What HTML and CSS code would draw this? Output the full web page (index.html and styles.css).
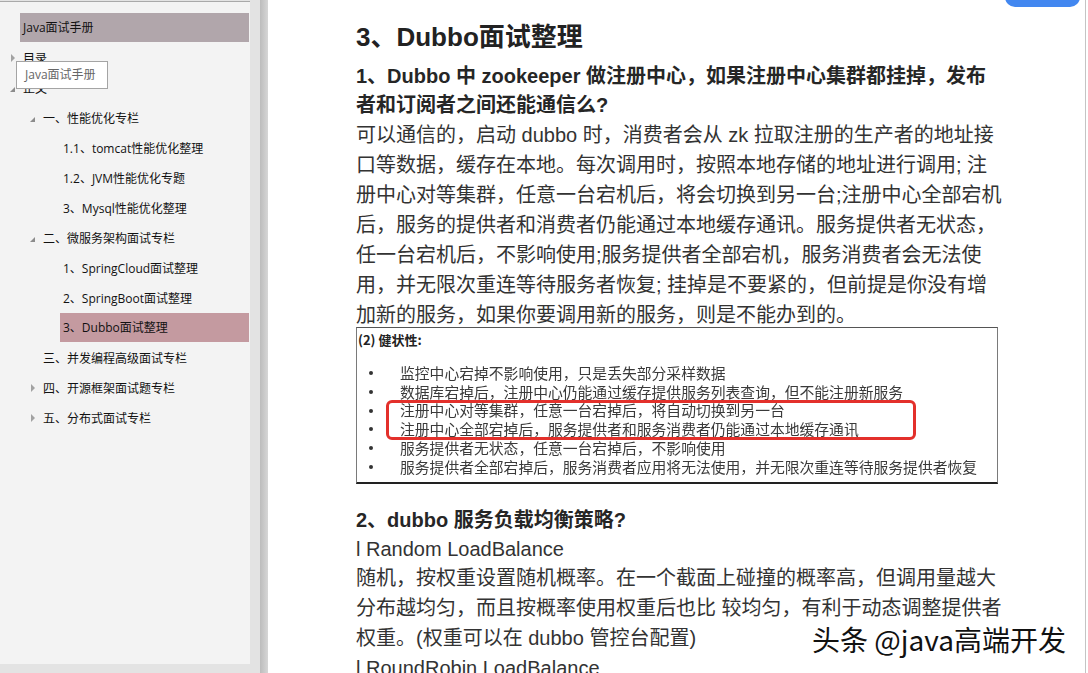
FILE: index.html
```html
<!DOCTYPE html>
<html lang="zh-CN">
<head>
<meta charset="UTF-8">
<title>Java面试手册</title>
<link rel="stylesheet" href="styles.css">
</head>
<body>
<div class="app">
    <div class="nav-pane">
        <aside class="sidebar">
            <div class="doc-title">Java面试手册</div>
            <ul class="tree">
                <li class="row lv0"><span class="tw closed"></span><span class="label">目录</span></li>
                <li class="row lv0"><span class="tw open"></span><span class="label">正文</span></li>
                <li class="row lv1"><span class="tw open"></span><span class="label">一、性能优化专栏</span></li>
                <li class="row lv2"><span class="tw"></span><span class="label">1.1、tomcat性能优化整理</span></li>
                <li class="row lv2"><span class="tw"></span><span class="label">1.2、JVM性能优化专题</span></li>
                <li class="row lv2"><span class="tw"></span><span class="label">3、Mysql性能优化整理</span></li>
                <li class="row lv1"><span class="tw open"></span><span class="label">二、微服务架构面试专栏</span></li>
                <li class="row lv2"><span class="tw"></span><span class="label">1、SpringCloud面试整理</span></li>
                <li class="row lv2"><span class="tw"></span><span class="label">2、SpringBoot面试整理</span></li>
                <li class="row lv2 selected"><span class="tw"></span><span class="label">3、Dubbo面试整理</span></li>
                <li class="row lv1"><span class="tw"></span><span class="label">三、并发编程高级面试专栏</span></li>
                <li class="row lv1"><span class="tw closed"></span><span class="label">四、开源框架面试题专栏</span></li>
                <li class="row lv1"><span class="tw closed"></span><span class="label">五、分布式面试专栏</span></li>
            </ul>
            <div class="tooltip">Java面试手册</div>
        </aside>
    </div>
    <div class="splitter"></div>
    <main class="page">
        <div class="badge"></div>
        <h1 class="title">3、Dubbo面试整理</h1>
        <h2 class="q">1、Dubbo 中 zookeeper 做注册中心，如果注册中心集群都挂掉，发布<br>者和订阅者之间还能通信么?</h2>
        <p class="para">可以通信的，启动 dubbo 时，消费者会从 zk 拉取注册的生产者的地址接<br>口等数据，缓存在本地。每次调用时，按照本地存储的地址进行调用; 注<br>册中心对等集群，任意一台宕机后，将会切换到另一台;注册中心全部宕机<br>后，服务的提供者和消费者仍能通过本地缓存通讯。服务提供者无状态，<br>任一台宕机后，不影响使用;服务提供者全部宕机，服务消费者会无法使<br>用，并无限次重连等待服务者恢复; 挂掉是不要紧的，但前提是你没有增<br>加新的服务，如果你要调用新的服务，则是不能办到的。</p>

        <div class="shot">
            <div class="shot-head">(2) 健状性:</div>
            <ul class="shot-list">
                <li>监控中心宕掉不影响使用，只是丢失部分采样数据</li>
                <li>数据库宕掉后，注册中心仍能通过缓存提供服务列表查询，但不能注册新服务</li>
                <li>注册中心对等集群，任意一台宕掉后，将自动切换到另一台</li>
                <li>注册中心全部宕掉后，服务提供者和服务消费者仍能通过本地缓存通讯</li>
                <li>服务提供者无状态，任意一台宕掉后，不影响使用</li>
                <li>服务提供者全部宕掉后，服务消费者应用将无法使用，并无限次重连等待服务提供者恢复</li>
            </ul>
            <div class="mark"></div>
        </div>

        <h2 class="q q2">2、dubbo 服务负载均衡策略?</h2>
        <p class="para">
            <span class="item">l Random LoadBalance</span>
            随机，按权重设置随机概率。在一个截面上碰撞的概率高，但调用量越大<br>分布越均匀，而且按概率使用权重后也比 较均匀，有利于动态调整提供者<br>权重。(权重可以在 dubbo 管控台配置)<br>l RoundRobin LoadBalance
        </p>
        <div class="watermark">头条 @java高端开发</div>
    </main>
</div>
</body>
</html>
```

FILE: styles.css
```css
html, body {
  margin: 0;
  height: 100%;
  overflow: hidden;
  background-color: #fff;
}

.app {
  display: flex;
  height: 100vh;
}

/* left outline pane */
.nav-pane {
  width: 260px;
  flex: none;
  background-color: #e3e3e3;
}

.sidebar {
  position: relative;
  width: 250px;
  height: 662px;
  margin-top: 1px;
  border-top: 1px solid #a9a9a9;
  background-color: #f3f3f3;
  font-family: 'Open Sans', 'Noto Sans CJK SC', sans-serif;
  font-size: 12px;
  color: #111;
}

.doc-title {
  margin: 11px 1px 1px 20px;
  height: 29px;
  line-height: 29px;
  padding-left: 3px;
  background-color: #b1a6ab;
}

.tree {
  list-style: none;
  margin: 0;
  padding: 0;
}

.row {
  display: flex;
  height: 30px;
  align-items: center;
}

.row.lv0 { padding-left: 10px; }
.row.lv1 { padding-left: 30px; }
.row.lv2 { padding-left: 50px; }

.tw {
  width: 13px;
  flex: none;
  display: flex;
  align-items: center;
}

.tw.closed::before {
  content: "";
  margin-left: 1px;
  border-left: 4px solid #a2a2a2;
  border-top: 4px solid transparent;
  border-bottom: 4px solid transparent;
}

.tw.open::before {
  content: "";
  margin-top: 2px;
  border-right: 5px solid #8c8c8c;
  border-top: 5px solid transparent;
}

.label {
  flex: 1;
  white-space: nowrap;
}

.row.selected .label {
  align-self: flex-start;
  height: 29px;
  line-height: 29px;
  margin-left: -3px;
  margin-right: 1px;
  padding-left: 3px;
  background-color: #c49aa0;
}

.tooltip {
  position: absolute;
  left: 16px;
  top: 59px;
  width: 92px;
  height: 28px;
  line-height: 26px;
  padding-left: 8px;
  box-sizing: border-box;
  border: 1px solid #a4a4a4;
  background-color: #fff;
  color: #666;
}

.splitter {
  width: 8px;
  flex: none;
  background: linear-gradient(to right, #bcbcbc, #d6d6d6);
}

/* document page */
.page {
  position: relative;
  flex: 1;
  margin-right: 2px;
  border-right: 1px solid #c4c4c4;
  padding: 17px 0 0 88px;
  font-family: 'Liberation Sans', 'Noto Sans CJK SC', sans-serif;
  color: #333;
  overflow: hidden;
}

.badge {
  position: absolute;
  right: 5px;
  top: -20px;
  width: 75px;
  height: 27px;
  border-radius: 10px;
  background-color: #4287f0;
}

.title {
  margin: 0 0 5px;
  font-size: 26px;
  line-height: 40px;
  color: #222;
}

.q {
  margin: 0;
  font-size: 20px;
  line-height: 29px;
  color: #262626;
}

.q2 {
  margin-top: 21px;
  line-height: 30px;
}

.para {
  margin: 0;
  font-size: 20px;
  line-height: 30px;
  white-space: nowrap;
}

.item {
  display: block;
  line-height: 28px;
}

/* pasted screenshot */
.shot {
  position: relative;
  width: 640px;
  height: 154px;
  margin-top: -3px;
  border: 1px solid #7a7a7a;
  border-top-color: #555;
  border-bottom: 2px solid #222;
  font-family: 'Noto Sans CJK SC', sans-serif;
  color: #3a3a3a;
}

.shot-head {
  padding: 3px 0 0 1px;
  font-size: 13px;
  line-height: 18px;
  font-weight: bold;
  color: #222;
}

.shot-list {
  list-style: none;
  margin: 15px 0 0;
  padding: 0;
  font-size: 14.8px;
  line-height: 18.7px;
  filter: blur(0.3px);
}

.shot-list li {
  display: flex;
  align-items: center;
  padding-left: 12px;
  white-space: nowrap;
}

.shot-list li::before {
  content: "";
  width: 4px;
  height: 4px;
  flex: none;
  border-radius: 50%;
  background-color: #333;
  margin-right: 27px;
}

.mark {
  position: absolute;
  left: 29px;
  top: 72px;
  width: 530px;
  height: 40px;
  box-sizing: border-box;
  border: 3px solid #e3302b;
  border-radius: 6px;
}

.watermark {
  position: absolute;
  left: 544px;
  top: 620px;
  font-family: 'Noto Sans CJK SC', sans-serif;
  font-size: 28px;
  line-height: 38px;
  color: #111;
  text-shadow: 1px 1px 0 #fff, -1px -1px 0 #fff, 0 0 3px #fff;
  white-space: nowrap;
}
```
